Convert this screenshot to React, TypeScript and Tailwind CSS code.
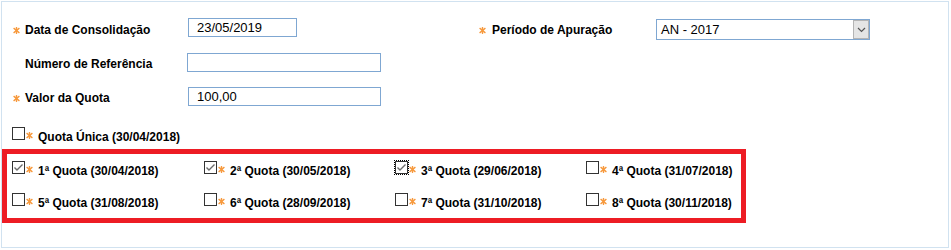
import React from "react"

const Asterisk = ({ className = "" }: { className?: string }) => (
  <svg width="7" height="7" viewBox="0 0 7 7" className={`shrink-0 ${className}`}>
    <g stroke="#f79a3e" strokeWidth="1.4" strokeLinecap="round">
      <line x1="3.5" y1="0.6" x2="3.5" y2="6.4" />
      <line x1="1" y1="1.4" x2="6" y2="5.6" />
      <line x1="1" y1="5.6" x2="6" y2="1.4" />
    </g>
  </svg>
)

const Check = ({ checked, focused }: { checked?: boolean; focused?: boolean }) => (
  <span
    className={`flex h-[13px] w-[13px] shrink-0 items-center justify-center border border-[#333] bg-white ${
      focused ? "outline-1 outline-dotted outline-black" : ""
    }`}
  >
    {checked && (
      <svg width="11" height="11" viewBox="0 0 11 11">
        <polyline points="1.5,5.5 4,8 9.5,2.5" fill="none" stroke="#6b6b6b" strokeWidth="1.4" />
      </svg>
    )}
  </span>
)

const QuotaItem = ({ label, checked, focused }: { label: string; checked?: boolean; focused?: boolean }) => (
  <div className="flex h-[32px] items-start">
    <Check checked={checked} focused={focused} />
    <Asterisk className="ml-px mt-[5px]" />
    <span className="ml-[5px] mt-[3px] whitespace-nowrap text-[12px] font-bold leading-[14px] text-black">{label}</span>
  </div>
)

const quotas = [
  { label: "1ª Quota (30/04/2018)", checked: true },
  { label: "2ª Quota (30/05/2018)", checked: true },
  { label: "3ª Quota (29/06/2018)", checked: true, focused: true },
  { label: "4ª Quota (31/07/2018)" },
  { label: "5ª Quota (31/08/2018)" },
  { label: "6ª Quota (28/09/2018)" },
  { label: "7ª Quota (31/10/2018)" },
  { label: "8ª Quota (30/11/2018)" },
]

const inputCls =
  "block h-[19px] border border-[#7fa7d2] bg-white px-[8px] text-[13px] leading-[15px] text-black outline-none"

export default function App() {
  return (
    <div className="ml-px mt-px h-[247px] w-[948px] border border-[#d1e2f0] bg-white font-['Liberation_Sans',Arial,sans-serif]">
      {/* Data de Consolidação / Período */}
      <div className="mt-[15px] flex h-[34px] items-start">
        <div className="flex w-[186px] items-start pl-[11px]">
          <Asterisk className="mt-[10px]" />
          <span className="ml-[5px] mt-[6px] text-[12px] font-bold leading-[14px]">Data de Consolidação</span>
        </div>
        <input className={`${inputCls} mt-px w-[109px]`} value="23/05/2019" readOnly />
        <div className="w-[182px]" />
        <div className="flex w-[177px] items-start">
          <Asterisk className="mt-[10px]" />
          <span className="ml-[6px] mt-[6px] text-[12px] font-bold leading-[14px]">Período de Apuração</span>
        </div>
        <div className="mt-[2px] flex h-[21px] w-[214px] items-stretch border border-[#7fa7d2] bg-white">
          <span className="flex-1 pl-[4px] pt-[2px] text-[13px] leading-[15px]">AN - 2017</span>
          <span className="flex w-[16px] items-center justify-center border border-[#b4b4b4] bg-[#e5e5e5]">
            <svg width="9" height="6" viewBox="0 0 9 6">
              <polyline points="1,1 4.5,4.5 8,1" fill="none" stroke="#555" strokeWidth="1.2" />
            </svg>
          </span>
        </div>
      </div>

      {/* Número de Referência */}
      <div className="flex h-[34px] items-start">
        <div className="w-[185px] pl-[23px]">
          <span className="mt-[6px] block text-[12px] font-bold leading-[14px]">Número de Referência</span>
        </div>
        <input className={`${inputCls} mt-[2px] w-[194px]`} value="" readOnly />
      </div>

      {/* Valor da Quota */}
      <div className="flex h-[34px] items-start">
        <div className="flex w-[186px] items-start pl-[11px]">
          <Asterisk className="mt-[10px]" />
          <span className="ml-[5px] mt-[6px] text-[12px] font-bold leading-[14px]">Valor da Quota</span>
        </div>
        <input className={`${inputCls} mt-[2px] w-[193px]`} value="100,00" readOnly />
      </div>

      {/* Quota Única */}
      <div className="mt-[8px] h-[22px] pl-[10px]">
        <QuotaItem label="Quota Única (30/04/2018)" />
      </div>

      {/* Quotas */}
      <div className="h-[74px] w-[744px] border-[5px] border-[#ed1c24] pl-[5px] pt-[7px]">
        <div className="grid grid-cols-[192px_191px_191px_1fr]">
          {quotas.map((q) => (
            <QuotaItem key={q.label} label={q.label} checked={q.checked} focused={q.focused} />
          ))}
        </div>
      </div>
    </div>
  )
}
